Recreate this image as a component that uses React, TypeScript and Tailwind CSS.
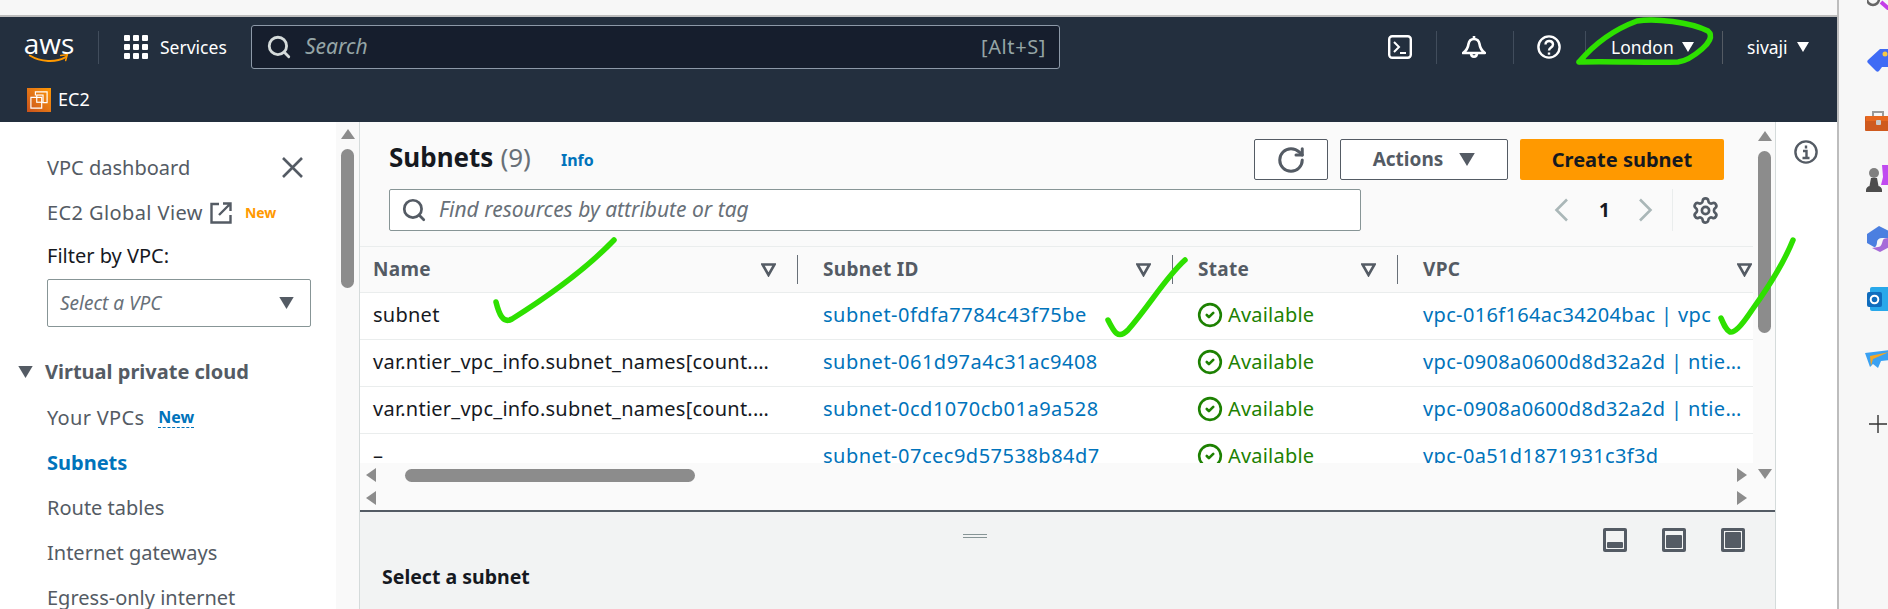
import { CircleCheck, RotateCw, Search, Settings } from 'lucide-react'

const subnets = [
  { name: 'subnet', id: 'subnet-0fdfa7784c43f75be', vpc: 'vpc-016f164ac34204bac | vpc' },
  { name: 'var.ntier_vpc_info.subnet_names[count.index]', id: 'subnet-061d97a4c31ac9408', vpc: 'vpc-0908a0600d8d32a2d | ntier-vpc-primary' },
  { name: 'var.ntier_vpc_info.subnet_names[count.index]', id: 'subnet-0cd1070cb01a9a528', vpc: 'vpc-0908a0600d8d32a2d | ntier-vpc-primary' },
  { name: '–', id: 'subnet-07cec9d57538b84d7', vpc: 'vpc-0a51d1871931c3f3d' },
]

const gridCols = 'grid grid-cols-[438px_375px_225px_356px]'

function Caret({ className }: { className: string }) {
  return (
    <svg viewBox="0 0 12 10" className={className} fill="currentColor">
      <path d="M0 0h12L6 10z" />
    </svg>
  )
}

function Arrow({ dir }: { dir: 'left' | 'right' }) {
  return (
    <svg viewBox="0 0 10 14" className="w-[10px] h-[14px] text-[#8c8c8c]" fill="currentColor">
      <path d={dir === 'left' ? 'M10 0v14L0 7z' : 'M0 0v14L10 7z'} />
    </svg>
  )
}

function SortIcon() {
  return (
    <svg viewBox="0 0 15 14" className="w-[15px] h-[14px] text-[#545b64] shrink-0" fill="none" stroke="currentColor" strokeWidth="2.6">
      <path d="M1.500 1.500h12L7.500 12z" />
    </svg>
  )
}

function Chevron({ d, className }: { d: string; className: string }) {
  return (
    <svg viewBox="0 0 15 24" className={className} fill="none" stroke="#aab7b8" strokeWidth="2.6">
      <path d={d} />
    </svg>
  )
}

function PaneIcon({ top }: { top: number }) {
  return (
    <svg viewBox="0 0 24 24" className="w-6 h-6">
      <rect width="24" height="24" rx="2" fill="#545b64" />
      <rect x="3" y="3" width="18" height="18" fill="#f2f3f3" />
      <rect x="4" y={top} width="16" height={20 - top} rx="1" fill="#545b64" />
    </svg>
  )
}

function Scribbles() {
  return (
    <svg className="absolute inset-0 pointer-events-none" width="1888" height="609" fill="none" stroke="#2ee000" strokeWidth="5.500" strokeLinecap="round" strokeLinejoin="round">
      <path d="M1579 62C1596 42 1618 28 1637 21C1655 18 1690 22 1708 31C1714 36 1708 44 1702 49C1694 56 1686 61 1678 62C1650 63 1610 61 1579 62" />
      <path d="M614 240C590 265 555 292 512 319C503 324 499 314 496 302" />
      <path d="M1185 260C1165 278 1150 305 1128 330C1118 340 1114 332 1108 320" />
      <path d="M1793 240C1785 260 1770 285 1752 310C1740 328 1734 333 1730 332C1726 330 1724 325 1721 318" />
    </svg>
  )
}

function BrowserRail() {
  return (
    <div className="w-[51px] h-full border-l-2 border-[#bdbdbd] bg-[#f7f7f7] pl-[26px] flex flex-col overflow-hidden shrink-0">
      <svg viewBox="0 0 24 10" className="w-6 h-[10px] ml-[2px] shrink-0">
        <circle cx="6" cy="-1" r="6" fill="none" stroke="#666" strokeWidth="2.500" />
        <path d="M14 2l8 7" stroke="#c43de8" strokeWidth="4" />
      </svg>
      <svg viewBox="0 0 24 24" className="w-6 h-6 mt-[38px] ml-[2px] shrink-0">
        <path d="M1 12L13 1h11v18h-9l-3 4c-1 1-2 1-3 0L1 15c-1-1-1-2 0-3z" fill="#3f6bf5" />
        <circle cx="18" cy="6" r="2.500" fill="#f6c945" />
      </svg>
      <svg viewBox="0 0 24 21" className="w-6 h-[21px] mt-[38px] shrink-0">
        <path d="M8 6V2h10v4" fill="none" stroke="#9a9a9a" strokeWidth="2" />
        <rect x="0" y="6" width="24" height="15" rx="1" fill="#cf5a1e" />
        <rect x="1" y="6" width="23" height="5" fill="#e8681f" />
        <rect x="11" y="10" width="5" height="5" rx="1" fill="#c9c9c9" />
      </svg>
      <svg viewBox="0 0 24 28" className="w-6 h-7 mt-[34px] shrink-0">
        <path d="M17 0h7v20h-8l2-8z" fill="#c04af0" />
        <circle cx="9" cy="8" r="5" fill="#808080" />
        <path d="M6 13h6l1.500 8h-9zM1 25c0-2 2-4 4-4h8c2 0 4 2 4 4v2H1z" fill="#4d4d4d" />
      </svg>
      <svg viewBox="0 0 24 26" className="w-6 h-[26px] mt-[33px] ml-[2px] shrink-0">
        <path d="M0 8L12 0l12 6v6H15c-3 0-5 2-5 4 0 2-1 6-3 5L0 17z" fill="#4b7fe0" />
        <path d="M24 12v8l-11 6-8-4 6-1c4 0 4-5 5-7 1-2 5-2 8-2z" fill="#a66bd8" />
      </svg>
      <svg viewBox="0 0 24 24" className="w-6 h-6 mt-[35px] ml-[2px] shrink-0">
        <rect x="3" y="0" width="21" height="24" rx="2" fill="#28a8ea" />
        <rect x="0" y="5" width="15" height="15" rx="2" fill="#0f6cbd" />
        <circle cx="7.500" cy="12.500" r="3.800" fill="none" stroke="#fff" strokeWidth="2" />
      </svg>
      <svg viewBox="0 0 24 18" className="w-6 h-[18px] mt-[39px] shrink-0">
        <path d="M0 3L24 0v10l-8 1-3 7-5-4-3 3z" fill="#3aa1f2" />
        <path d="M5 6L24 2 8 9l-2 7z" fill="#f5a623" />
      </svg>
      <svg viewBox="0 0 18 18" className="w-[18px] h-[18px] mt-[47px] ml-[4px] shrink-0" stroke="#333" strokeWidth="1.400">
        <path d="M9 0v18M0 9h18" />
      </svg>
    </div>
  )
}

function TopNav() {
  return (
    <div className="h-[105px] bg-[#232f3e] text-white shrink-0">
      <div className="h-[60px] flex items-center pl-[25px]">
        <div className="w-[48px] h-[32px] flex flex-col items-center shrink-0">
          <span className="text-[28px] leading-[24px] h-[22px] font-['Open_Sans',sans-serif]">aws</span>
          <svg viewBox="0 0 48 12" className="w-[48px] h-[12px]" fill="none" stroke="#f90" strokeWidth="2.400" strokeLinecap="round">
            <path d="M1 3C14 11 32 12 44 5" />
            <path d="M38 3l8-1-2 7" strokeWidth="1.800" />
          </svg>
        </div>
        <div className="w-px h-[33px] bg-[#414d5c] ml-[25px]" />
        <div className="ml-[25px] grid grid-cols-3 gap-[3px] w-[24px] shrink-0">
          {Array.from({ length: 9 }).map((_, i) => (
            <span key={i} className="w-[6px] h-[6px] rounded-[1px] bg-white" />
          ))}
        </div>
        <span className="ml-[12px] w-[91px] text-[17.500px]">Services</span>
        <div className="w-[809px] h-[44px] bg-[#161e2d] border border-[#8d99a8] rounded-[3px] flex items-center pl-[14px] pr-[13px] shrink-0">
          <Search size={26} strokeWidth={2.600} className="text-[#d5dbdb]" />
          <span className="ml-[13px] italic text-[21px] text-[#95a5a6]">Search</span>
          <span className="ml-auto text-[20px] tracking-[0.6px] text-[#95a5a6]">[Alt+S]</span>
        </div>
        <svg viewBox="0 0 24 24" className="w-6 h-6 ml-[328px] shrink-0" fill="none" stroke="#fff" strokeWidth="2.400">
          <rect x="1.200" y="1.200" width="21.600" height="21.600" rx="3" />
          <path d="M6 7l5 5-5 5M12 18h6" strokeWidth="2" />
        </svg>
        <div className="w-px h-[33px] bg-[#414d5c] ml-[24px]" />
        <svg viewBox="0 0 24 24" className="w-6 h-6 ml-[25px] shrink-0" fill="none" stroke="#fff" strokeWidth="2.600" strokeLinejoin="round">
          <path d="M1 18c3-2 5-5 5.500-9 .5-3 2.500-5 5.500-5s5 2 5.500 5c.5 4 2.500 7 5.500 9z" />
          <path d="M12 1v3" />
          <path d="M9 18c0 5 6 5 6 0" />
        </svg>
        <div className="w-px h-[33px] bg-[#414d5c] ml-[27px]" />
        <svg viewBox="0 0 24 24" className="w-6 h-6 ml-[23px] shrink-0" fill="none" stroke="#fff" strokeWidth="2.400">
          <circle cx="12" cy="12" r="10.600" />
          <path d="M8.500 9.500c0-5 7.500-4.500 7.500 0 0 3-4 3-4 6" />
          <path d="M12 17.500v2.200" />
        </svg>
        <div className="w-px h-[33px] bg-[#414d5c] ml-[24px]" />
        <span className="ml-[25px] w-[71px] text-[17.500px]">London</span>
        <Caret className="w-3 h-[10px] shrink-0" />
        <div className="w-px h-[33px] bg-[#545b64] ml-[28px]" />
        <span className="ml-[24px] w-[50px] text-[17.500px]">sivaji</span>
        <Caret className="w-3 h-[10px] shrink-0" />
      </div>
      <div className="h-[45px] flex items-center pl-[27px]">
        <div className="w-[24px] h-[24px] bg-gradient-to-tr from-[#c8511b] to-[#ff9900] flex items-center justify-center">
          <svg viewBox="0 0 20 20" className="w-[18px] h-[18px]" fill="none" stroke="#fff" strokeWidth="1.300">
            <path d="M6 5V1h13v12h-5" />
            <path d="M1 7h12v12H1z" />
            <rect x="7.500" y="4.500" width="7" height="8" />
          </svg>
        </div>
        <span className="ml-[7px] text-[18px]">EC2</span>
      </div>
    </div>
  )
}

function Sidebar() {
  const row = 'h-[45px] flex items-center pl-[47px] shrink-0'
  return (
    <div className="w-[336px] h-full overflow-hidden bg-white pt-[23px] text-[20px] text-[#545b64] flex flex-col shrink-0">
      <div className={row + ' pr-[33px] justify-between'}>
        <span>VPC dashboard</span>
        <svg viewBox="0 0 21 21" className="w-[21px] h-[21px]" fill="none" stroke="#545b64" strokeWidth="2.600">
          <path d="M1 1l19 19M20 1L1 20" />
        </svg>
      </div>
      <div className={row}>
        <span className="tracking-[0.4px]">EC2 Global View</span>
        <svg viewBox="0 0 22 22" className="w-[22px] h-[22px] ml-[7px]" fill="none" stroke="#545b64" strokeWidth="2.400">
          <path d="M9 2H1.500v18.500h19V13" />
          <path d="M13 1.500h7.500V9M20 2 9 13" />
        </svg>
        <span className="ml-[13px] text-[14px] font-bold text-[#ff9900]">New</span>
      </div>
      <div className="h-[41px] flex items-center pl-[47px] text-[#16191f] shrink-0">Filter by VPC:</div>
      <div className="ml-[47px] mt-[3px] w-[264px] h-[48px] border border-[#879596] rounded-[2px] flex items-center px-[12px] pr-[16px] shrink-0">
        <span className="italic text-[19px] text-[#687078]">Select a VPC</span>
        <Caret className="w-[15px] h-[12px] ml-auto" />
      </div>
      <div className="h-[45px] mt-[22px] flex items-center pl-[18px] shrink-0">
        <Caret className="w-[15px] h-[12px]" />
        <span className="ml-[12px] font-bold">Virtual private cloud</span>
      </div>
      <div className={row + ' mt-[1px]'}>
        <span className="tracking-[0.3px]">Your VPCs</span>
        <span className="ml-[14px] text-[16px] font-bold text-[#0073bb] border-b border-dashed border-[#0073bb] leading-[20px]">New</span>
      </div>
      <div className={row + ' font-bold text-[#0073bb]'}>Subnets</div>
      <div className={row}>Route tables</div>
      <div className={row}>Internet gateways</div>
      <div className={row}>Egress-only internet</div>
    </div>
  )
}

function SubnetTable() {
  return (
    <div className="mt-[15px] h-[217px] overflow-hidden bg-white text-[20px] shrink-0">
      <div className={gridCols + ' h-[47px] bg-[#fafafa] border-y border-[#eaeded]'}>
        {['Name', 'Subnet ID', 'State', 'VPC'].map((h, i) => (
          <div key={h} className={(i === 0 ? 'pl-[13px] pr-[22px]' : i === 3 ? 'pl-[25px] pr-[2px]' : 'pl-[25px] pr-[22px]') + ' flex items-center relative'}>
            <span className="text-[19px] font-bold tracking-[0.3px] text-[#545b64]">{h}</span>
            <span className="ml-auto"><SortIcon /></span>
            {i < 3 && <span className="absolute right-0 top-[8px] bottom-[8px] w-px bg-[#687078]" />}
          </div>
        ))}
      </div>
      {subnets.map((s) => (
        <div key={s.id} className={gridCols + ' h-[47px] pb-[2px] border-b border-[#eaeded] items-center'}>
          <div className="pl-[13px] pr-[25px] truncate tracking-[0.25px] text-[#16191f]">{s.name}</div>
          <div className="pl-[25px] tracking-[0.5px] text-[#0073bb]">{s.id}</div>
          <div className="pl-[24px] flex items-center text-[#1d8102]">
            <CircleCheck size={26} strokeWidth={2.400} />
            <span className="ml-[5px] tracking-[0.2px]">Available</span>
          </div>
          <div className="pl-[25px] pr-[9px] truncate tracking-[0.35px] text-[#0073bb]">{s.vpc}</div>
        </div>
      ))}
    </div>
  )
}

function ContentPanel() {
  return (
    <div className="flex-1 min-w-0 bg-[#fafafa] flex flex-col">
      <div className="pt-[17px] pl-[29px] pr-[29px] h-[58px] flex items-center shrink-0">
        <span className="text-[26px] -mt-[4px] font-bold text-[#16191f]">Subnets</span>
        <span className="ml-[7px] -mt-[4px] text-[26px] text-[#687078]">(9)</span>
        <span className="ml-[30px] text-[16px] font-bold text-[#0073bb]">Info</span>
        <div className="ml-auto w-[74px] h-[41px] border border-[#545b64] rounded-[2px] bg-white flex items-center justify-center">
          <RotateCw size={30} strokeWidth={2.400} className="text-[#545b64]" />
        </div>
        <div className="ml-[12px] w-[168px] h-[41px] border border-[#545b64] rounded-[2px] bg-white flex items-center justify-center text-[19px] font-bold text-[#545b64]">
          Actions
          <Caret className="w-[16px] h-[13px] ml-[16px]" />
        </div>
        <div className="ml-[12px] w-[204px] h-[41px] rounded-[2px] bg-[#ff9900] flex items-center justify-center text-[20px] font-bold text-[#16191f]">
          Create subnet
        </div>
      </div>
      <div className="mt-[9px] h-[42px] pl-[29px] flex items-center shrink-0">
        <div className="w-[972px] h-full bg-white border border-[#879596] rounded-[2px] flex items-center pl-[11px]">
          <Search size={26} strokeWidth={2.500} className="text-[#545b64]" />
          <span className="ml-[12px] italic text-[21px] text-[#687078]">Find resources by attribute or tag</span>
        </div>
        <Chevron d="M13 1.500L2.500 12 13 22.500" className="ml-[193px] w-[15px] h-[24px]" />
        <span className="ml-[30px] w-[10px] text-[19px] font-bold text-[#16191f]">1</span>
        <Chevron d="M2 1.500L12.500 12 2 22.500" className="ml-[29px] w-[15px] h-[24px]" />
        <div className="ml-[19px] w-px h-full bg-[#eaeded]" />
        <Settings size={29} strokeWidth={2.200} className="ml-[18px] text-[#545b64]" />
      </div>
      <SubnetTable />
      <div className="h-[47px] bg-[#fafafa] px-[6px] pt-[5px] shrink-0">
        <div className="h-[14px] flex items-center">
          <Arrow dir="left" />
          <div className="ml-[29px] w-[290px] h-[13px] rounded-full bg-[#8c8c8c]" />
          <span className="ml-auto"><Arrow dir="right" /></span>
        </div>
        <div className="h-[14px] mt-[9px] flex items-center justify-between">
          <Arrow dir="left" />
          <Arrow dir="right" />
        </div>
      </div>
    </div>
  )
}

export default function App() {
  return (
    <div className="relative w-[1888px] h-[609px] overflow-hidden flex bg-white font-['Noto_Sans',sans-serif]">
      <div className="w-[1837px] h-full flex flex-col shrink-0">
        <div className="h-[15px] bg-[#f7f7f7] shrink-0" />
        <div className="h-[2px] bg-[#bdbdbd] shrink-0" />
        <TopNav />
        <div className="flex-1 min-h-0 flex">
          <Sidebar />
          <div className="w-[24px] h-full bg-[#f9f9f9] border-r border-[#d5dbdb] pl-[5px] shrink-0">
            <svg viewBox="0 0 14 10" className="w-[14px] h-[10px] mt-[7px] text-[#8c8c8c]" fill="currentColor">
              <path d="M7 0l7 10H0z" />
            </svg>
            <div className="mt-[10px] w-[13px] h-[139px] rounded-full bg-[#8c8c8c]" />
          </div>
          <div className="w-[1416px] h-full flex flex-col border-r border-[#d5dbdb] shrink-0">
            <div className="h-[388px] flex shrink-0">
              <ContentPanel />
              <div className="w-[22px] bg-[#fafafa] pl-[5px] pt-[9px] shrink-0">
                <svg viewBox="0 0 14 10" className="w-[14px] h-[10px] text-[#8c8c8c]" fill="currentColor">
                  <path d="M7 0l7 10H0z" />
                </svg>
                <div className="mt-[10px] w-[13px] h-[182px] rounded-full bg-[#8c8c8c]" />
                <svg viewBox="0 0 14 10" className="mt-[136px] w-[14px] h-[10px] text-[#8c8c8c]" fill="currentColor">
                  <path d="M0 0h14L7 10z" />
                </svg>
              </div>
            </div>
            <div className="h-[2px] bg-[#545b64] shrink-0" />
            <div className="flex-1 bg-[#f2f3f3] px-[22px] pt-[16px]">
              <div className="h-[24px] flex items-center">
                <div className="ml-[581px] w-[24px] flex flex-col gap-[2px] -mt-[9px]">
                  <span className="h-px bg-[#879596]" />
                  <span className="h-px bg-[#879596]" />
                </div>
                <div className="ml-auto mr-[8px] flex gap-[35px]">
                  <PaneIcon top={14} />
                  <PaneIcon top={7} />
                  <PaneIcon top={4} />
                </div>
              </div>
              <div className="mt-[10px] text-[19.500px] font-bold text-[#16191f]">Select a subnet</div>
            </div>
          </div>
          <div className="flex-1 bg-white flex justify-center pt-[18px]">
            <svg viewBox="0 0 24 24" className="w-6 h-6 ml-[-2px]" fill="none" stroke="#545b64" strokeWidth="2.400">
              <circle cx="12" cy="12" r="10.600" />
              <path d="M12 5.500v3M9 11h3.500v7M8.500 18h7" />
            </svg>
          </div>
        </div>
      </div>
      <BrowserRail />
      <Scribbles />
    </div>
  )
}
